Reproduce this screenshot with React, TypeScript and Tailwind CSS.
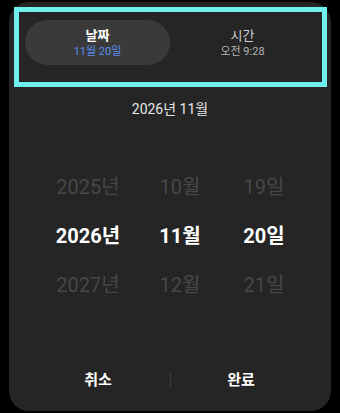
const font = { fontFamily: 'Roboto, "Noto Sans CJK KR", sans-serif' };

const years = ['2025년', '2026년', '2027년'];
const months = ['10월', '11월', '12월'];
const days = ['19일', '20일', '21일'];

function WheelColumn({ items, width }: { items: string[]; width: string }) {
  return (
    <div className={`flex flex-col items-center ${width}`}>
      {items.map((item, i) => (
        <div
          key={item}
          className={
            i === 1
              ? 'h-[49px] flex items-center text-[20px] font-bold text-white'
              : 'h-[49px] flex items-center text-[20px] text-[#474747]'
          }
        >
          {item}
        </div>
      ))}
    </div>
  );
}

export default function App() {
  return (
    <div className="w-[340px] h-[413px] bg-black pt-[2px] pl-[9px]" style={font}>
      <div className="w-[322px] h-[409px] rounded-[20px] bg-[#252525] flex flex-col">
        {/* tabs */}
        <div className="ml-[5px] mt-[5px] w-[313px] h-[80px] border-[5px] border-[#6ff0ee] pl-[6px] pt-[8px]">
          <div className="flex">
            <div className="w-[145px] h-[45px] rounded-full bg-[#3a3a3a] flex flex-col items-center justify-center">
              <span className="text-[13px] leading-[17px] font-bold text-white">날짜</span>
              <span className="text-[11px] leading-[15px] text-[#5b8ef0]">11월 20일</span>
            </div>
            <div className="w-[145px] h-[45px] flex flex-col items-center justify-center">
              <span className="text-[13px] leading-[17px] text-[#cfcfcf]">시간</span>
              <span className="text-[11px] leading-[15px] text-[#b5b5b5]">오전 9:28</span>
            </div>
          </div>
        </div>

        <div className="mt-[13px] text-center text-[14px] leading-[18px] text-[#e6e6e6]">2026년 11월</div>

        {/* wheels */}
        <div className="mt-[44px] flex pl-[21px]">
          <WheelColumn items={years} width="w-[116px]" />
          <WheelColumn items={months} width="w-[68px]" />
          <WheelColumn items={days} width="w-[100px]" />
        </div>

        {/* buttons */}
        <div className="mt-[51px] flex items-center pl-[17px]">
          <button className="w-[144px] h-[40px] text-[15px] font-bold text-white">취소</button>
          <div className="w-px h-[14px] bg-[#3c3c3c]" />
          <button className="w-[140px] h-[40px] text-[15px] font-bold text-white">완료</button>
        </div>
      </div>
    </div>
  );
}
